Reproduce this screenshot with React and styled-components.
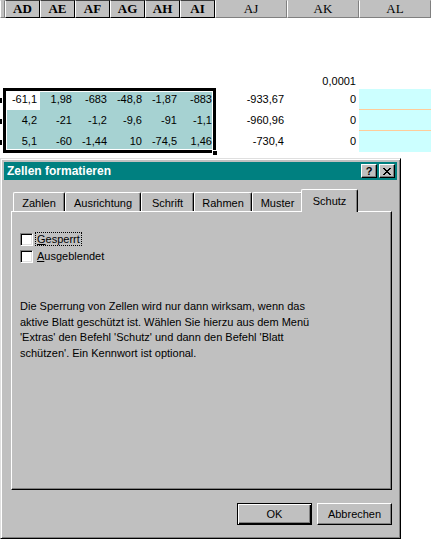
import React from 'react'
import styled, { createGlobalStyle } from 'styled-components'

const Global = createGlobalStyle`
  html, body { margin: 0; padding: 0; background: #fff; overflow: hidden; }
  body { width: 431px; height: 539px; font-family: "Liberation Sans", Arial, sans-serif; }
  * { box-sizing: border-box; }
`

const COLS = [5, 35, 35, 35, 35, 35, 35, 72, 72, 72]
const GRID = COLS.map(w => w + 'px').join(' ')

const Page = styled.div`
  width: 431px;
  height: 539px;
  display: flex;
  flex-direction: column;
  overflow: hidden;
`

const HeaderBar = styled.div`
  display: grid;
  grid-template-columns: ${GRID};
  height: 17px;
  background: #c0c0c0;
`

const ColHead = styled.div`
  display: flex;
  align-items: center;
  justify-content: center;
  font-family: "Liberation Serif", "Times New Roman", serif;
  font-size: 13px;
  font-weight: ${p => (p.$sel ? 700 : 400)};
  color: #000;
  border-left: 1px solid #fff;
  border-right: 1px solid ${p => (p.$sel ? '#000' : '#808080')};
  border-bottom: 1px solid ${p => (p.$sel ? '#000' : '#808080')};
  border-top: 1px solid ${p => (p.$sel ? '#404040' : '#c0c0c0')};
`

const Sheet = styled.div`
  display: grid;
  grid-template-columns: ${GRID};
  grid-template-rows: 51px 21px 21px 21px 21px;
`

const Cell = styled.div`
  grid-row: ${p => p.$r};
  grid-column: ${p => p.$c};
  display: flex;
  justify-content: flex-end;
  align-items: ${p => (p.$bottom ? 'flex-end' : 'center')};
  padding: 0 3px ${p => (p.$bottom ? '1px' : '0')} 0;
  font-size: 11px;
  line-height: 13px;
  color: #000;
  background: ${p => p.$bg || 'transparent'};
  border-bottom: ${p => (p.$line ? '1px solid #ffcc99' : 'none')};
`

const RowMark = styled.div`
  grid-row: ${p => p.$r};
  grid-column: 1;
  display: flex;
  align-items: center;
  &::before {
    content: '';
    width: 2px;
    height: 5px;
    margin-top: 2px;
    background: #000;
  }
`

const Selection = styled.div`
  grid-column: 2 / 8;
  grid-row: 3 / 6;
  margin: -1px -1px -1px -2px;
  border: 3px solid #000;
  box-shadow: inset 0 0 0 1px #fff;
  position: relative;
  z-index: 1;
  pointer-events: none;
`

const FillHandle = styled.div`
  position: absolute;
  right: -4px;
  bottom: -5px;
  width: 5px;
  height: 5px;
  background: #000;
  border-left: 1px solid #fff;
  border-top: 1px solid #fff;
`

const SheetFoot = styled.div`
  height: 6px;
`

const Dialog = styled.div`
  width: 401px;
  flex: 1;
  display: flex;
  flex-direction: column;
  background: #c0c0c0;
  border-top: 1px solid #dfdfdf;
  border-left: 1px solid #dfdfdf;
  border-right: 1px solid #000;
  border-bottom: 1px solid #000;
  box-shadow: inset 1px 1px 0 #fff, inset -1px -1px 0 #808080;
  padding: 3px;
`

const TitleBar = styled.div`
  height: 18px;
  background: #008080;
  display: flex;
  align-items: center;
  padding: 0 2px 0 3px;
`

const Title = styled.div`
  flex: 1;
  color: #fff;
  font-weight: 700;
  font-size: 12px;
`

const TitleBtn = styled.div`
  width: 16px;
  height: 14px;
  margin-left: ${p => (p.$gap ? '2px' : '0')};
  background: #c0c0c0;
  border-top: 1px solid #fff;
  border-left: 1px solid #fff;
  border-right: 1px solid #000;
  border-bottom: 1px solid #000;
  box-shadow: inset -1px -1px 0 #808080;
  display: flex;
  align-items: center;
  justify-content: center;
  font-size: 11px;
  font-weight: 700;
  color: #000;
  line-height: 1;
`

const Body = styled.div`
  flex: 1;
  display: flex;
  flex-direction: column;
  padding: 8px 5px 10px 7px;
`

const TabStrip = styled.div`
  display: flex;
  align-items: flex-end;
  height: 23px;
  padding-left: 2px;
`

const Tab = styled.div`
  width: ${p => p.$w}px;
  height: ${p => (p.$active ? 23 : 19)}px;
  margin: ${p => (p.$active ? '0 0 -1px -2px' : '0')};
  position: relative;
  z-index: ${p => (p.$active ? 2 : 0)};
  background: #c0c0c0;
  border-top: 1px solid #fff;
  border-left: 1px solid #fff;
  border-right: 1px solid #000;
  border-radius: 2px 2px 0 0;
  box-shadow: inset -1px 0 0 #808080;
  display: flex;
  align-items: center;
  justify-content: center;
  padding-top: ${p => (p.$active ? 0 : 2)}px;
  font-size: 11px;
  color: #000;
`

const Panel = styled.div`
  flex: 1;
  border-top: 1px solid #fff;
  border-left: 1px solid #fff;
  border-right: 1px solid #000;
  border-bottom: 1px solid #000;
  box-shadow: inset -1px -1px 0 #808080;
  padding: 20px 8px 0 8px;
  display: flex;
  flex-direction: column;
`

const CheckRow = styled.label`
  display: flex;
  align-items: center;
  height: 20px;
  margin-top: -3px;
  font-size: 11px;
  color: #000;
  u { text-decoration: underline; }
`

const Box = styled.span`
  width: 13px;
  height: 13px;
  background: #fff;
  border-top: 1px solid #808080;
  border-left: 1px solid #808080;
  border-right: 1px solid #fff;
  border-bottom: 1px solid #fff;
  box-shadow: inset 1px 1px 0 #000, inset -1px -1px 0 #dfdfdf;
  margin-right: 2px;
`

const Label = styled.span`
  padding: 0 1px;
  border: 1px ${p => (p.$focus ? 'dotted #000' : 'solid transparent')};
`

const Note = styled.p`
  margin: 33px 0 0 0;
  font-size: 11px;
  line-height: 15.7px;
  color: #000;
`

const ButtonRow = styled.div`
  display: flex;
  justify-content: flex-end;
  gap: 5px;
  margin-top: 13px;
`

const Button = styled.div`
  width: 75px;
  height: 22px;
  background: #c0c0c0;
  display: flex;
  align-items: center;
  justify-content: center;
  font-size: 11px;
  color: #000;
  border: 1px solid #000;
  ${p =>
    p.$default
      ? 'box-shadow: inset 1px 1px 0 #fff, inset -1px -1px 0 #000, inset -2px -2px 0 #808080;'
      : 'border-top-color: #fff; border-left-color: #fff; box-shadow: inset -1px -1px 0 #808080;'}
`

const TEAL = '#a6d2d2'
const CYAN = '#ccffff'

const rows = [
  ['-61,1', '1,98', '-683', '-48,8', '-1,87', '-883', '-933,67', '0'],
  ['4,2', '-21', '-1,2', '-9,6', '-91', '-1,1', '-960,96', '0'],
  ['5,1', '-60', '-1,44', '10', '-74,5', '1,46', '-730,4', '0'],
]

const heads = ['AD', 'AE', 'AF', 'AG', 'AH', 'AI']
const tabs = [
  ['Zahlen', 52], ['Ausrichtung', 76], ['Schrift', 53],
  ['Rahmen', 58], ['Muster', 51], ['Schutz', 57],
]

export default function App() {
  return (
    <Page>
      <Global />
      <HeaderBar>
        <ColHead />
        {heads.map(h => <ColHead key={h} $sel>{h}</ColHead>)}
        <ColHead>AJ</ColHead>
        <ColHead>AK</ColHead>
        <ColHead>AL</ColHead>
      </HeaderBar>

      <Sheet>
        <Cell $r={2} $c={9} $bottom>0,0001</Cell>
        {rows.map((r, i) => (
          <React.Fragment key={i}>
            <RowMark $r={i + 3} />
            {r.slice(0, 6).map((v, j) => (
              <Cell key={j} $r={i + 3} $c={j + 2} $bg={i === 0 && j === 0 ? '#fff' : TEAL}>{v}</Cell>
            ))}
            <Cell $r={i + 3} $c={8}>{r[6]}</Cell>
            <Cell $r={i + 3} $c={9}>{r[7]}</Cell>
            <Cell $r={i + 3} $c={10} $bg={CYAN} $line={i < 2} />
          </React.Fragment>
        ))}
        <Selection>
          <FillHandle />
        </Selection>
      </Sheet>
      <SheetFoot />

      <Dialog>
        <TitleBar>
          <Title>Zellen formatieren</Title>
          <TitleBtn>?</TitleBtn>
          <TitleBtn $gap>
            <svg width="8" height="7" viewBox="0 0 8 7">
              <path d="M0 0h2v1h1v1h2V1h1V0h2v1H7v1H6v1H5v1h1v1h1v1h1v1H6V6H5V5H3v1H2v1H0V6h1V5h1V4h1V3H2V2H1V1H0z" fill="#000" />
            </svg>
          </TitleBtn>
        </TitleBar>
        <Body>
          <TabStrip>
            {tabs.map(([t, w]) => (
              <Tab key={t} $w={w} $active={t === 'Schutz'}>{t}</Tab>
            ))}
          </TabStrip>
          <Panel>
            <CheckRow>
              <Box />
              <Label $focus><u>G</u>esperrt</Label>
            </CheckRow>
            <CheckRow>
              <Box />
              <Label><u>A</u>usgeblendet</Label>
            </CheckRow>
            <Note>
              Die Sperrung von Zellen wird nur dann wirksam, wenn das<br />
              aktive Blatt geschützt ist. Wählen Sie hierzu aus dem Menü<br />
              'Extras' den Befehl 'Schutz' und dann den Befehl 'Blatt<br />
              schützen'. Ein Kennwort ist optional.
            </Note>
          </Panel>
          <ButtonRow>
            <Button $default>OK</Button>
            <Button>Abbrechen</Button>
          </ButtonRow>
        </Body>
      </Dialog>
    </Page>
  )
}
